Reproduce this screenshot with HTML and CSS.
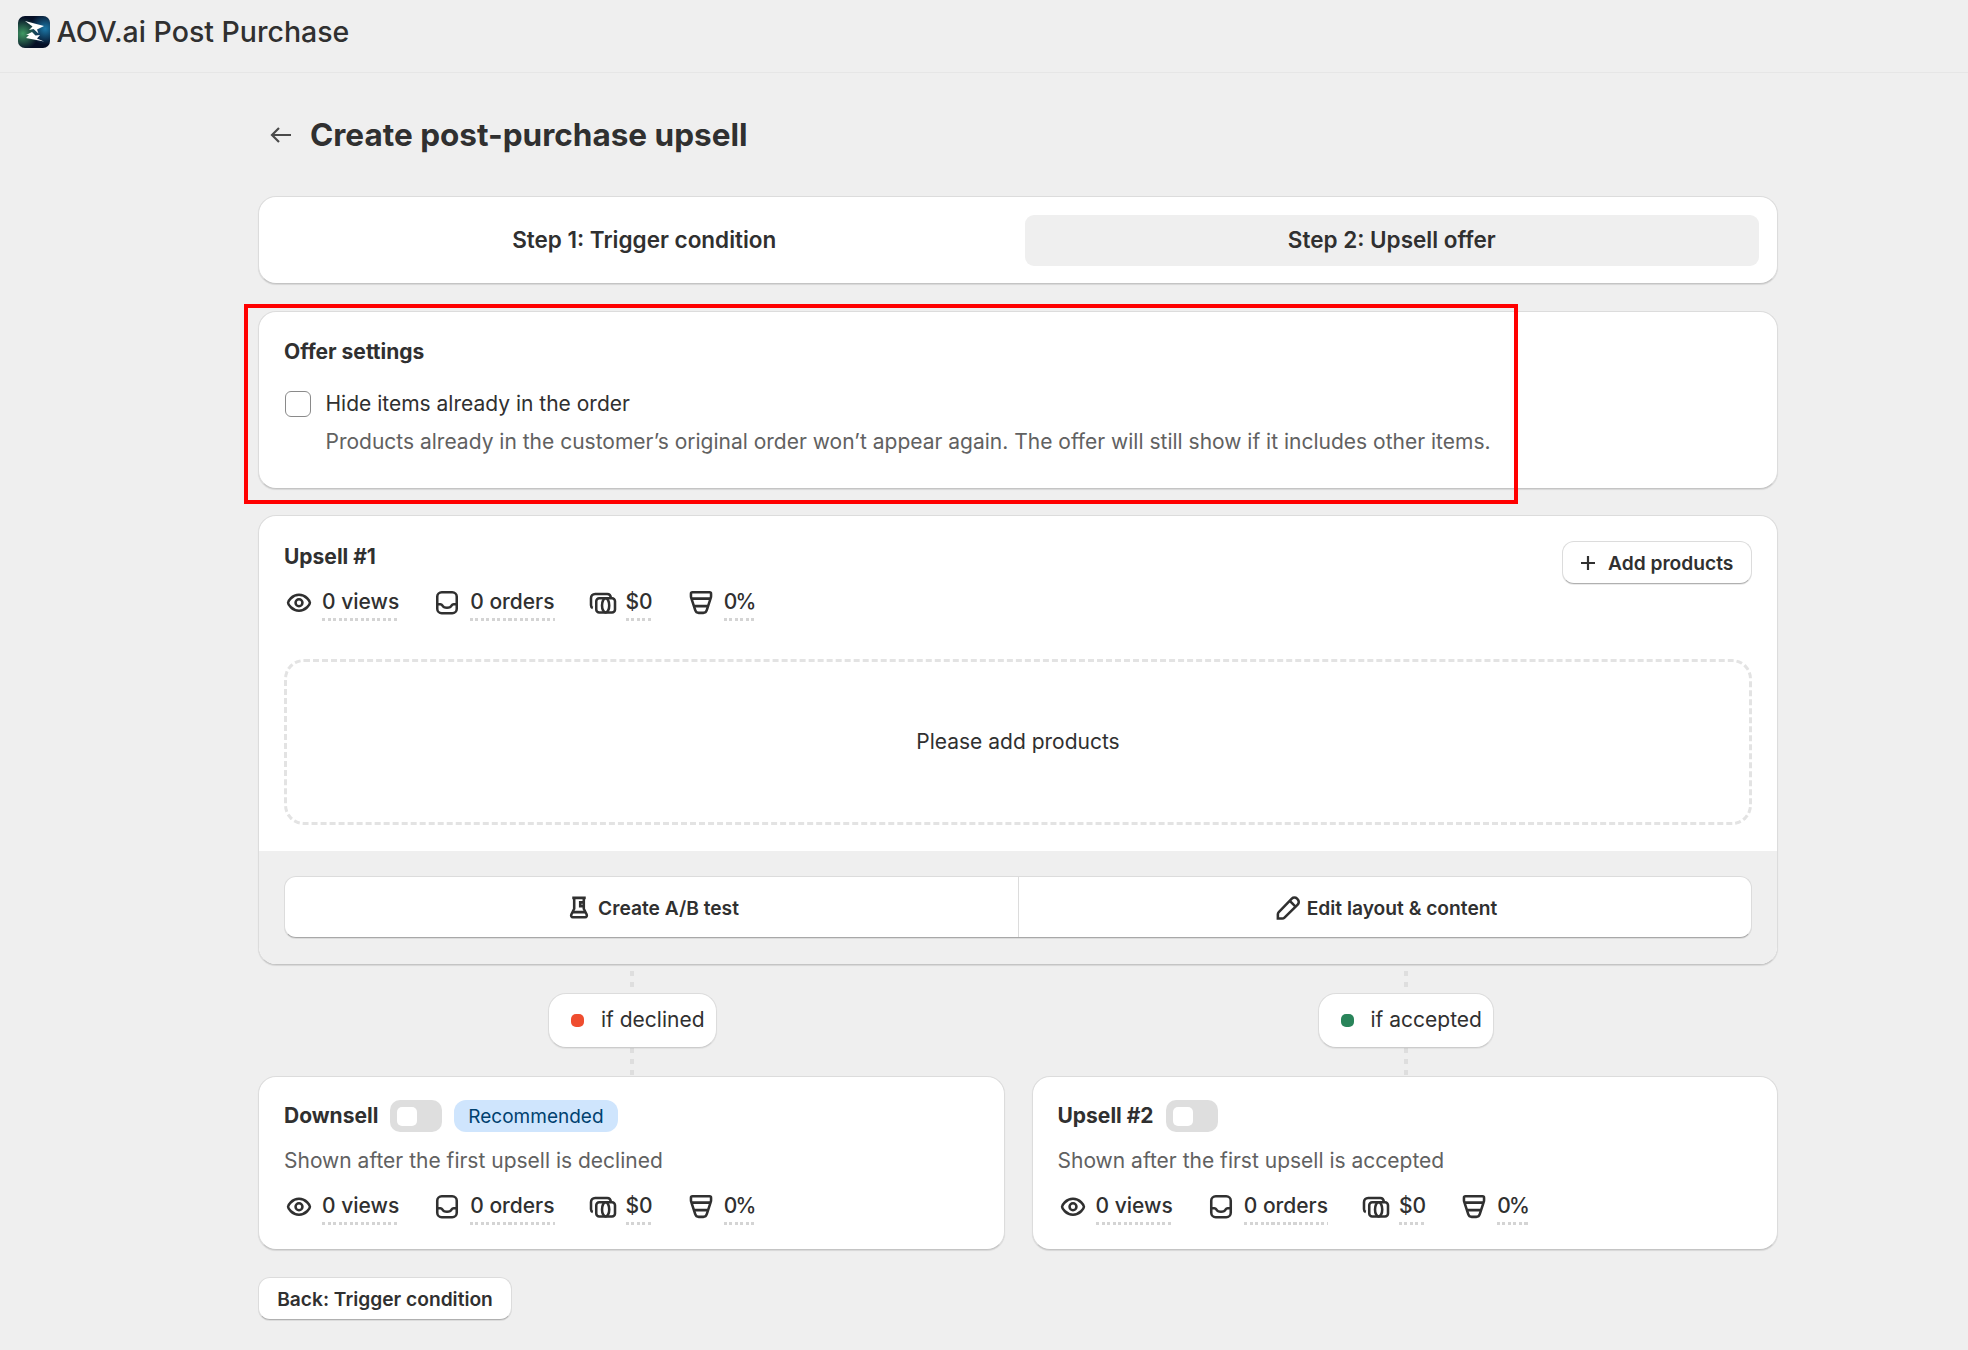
FILE: index.html
```html
<!DOCTYPE html>
<html lang="en">
<head>
<meta charset="utf-8"/>
    <title>AOV.ai Post Purchase</title>
    <link rel="stylesheet" href="styles.css">
</head>
<body>
    <svg class="sprites" width="0" height="0">
        <symbol id="i-eye" viewBox="0 0 20 20"><path d="M2.700 10.500c0-1 2.600-5.300 7.300-5.300s7.300 4.300 7.300 5.300-2.600 5.300-7.300 5.300S2.700 11.500 2.700 10.500z"/><circle cx="10" cy="10.500" r="2.300"/></symbol>
        <symbol id="i-inbox" viewBox="0 0 20 20"><rect x="3.500" y="3.500" width="13" height="14" rx="3"/><path d="M3.500 11.500h2.100c.6 0 1 .3 1.300.8.5 1 1.500 1.500 3.100 1.500s2.600-.5 3.100-1.500c.3-.5.7-.8 1.300-.8h2.100"/></symbol>
        <symbol id="i-cash" viewBox="0 0 20 20"><rect x="5.500" y="7.500" width="12.500" height="9.500" rx="2"/><ellipse cx="11.750" cy="12.250" rx="2.400" ry="4.750"/><path d="M3.200 14c-.9-.3-1.200-1-1.200-1.800V7.500c0-1.700 1.100-2.800 2.800-2.800h8c1.400 0 2.300.8 2.500 2.800"/></symbol>
        <symbol id="i-funnel" viewBox="0 0 20 20"><path d="M4.300 3.500h11.400c.6 0 1 .4 1 1v1.600c0 .5-.1 1-.3 1.500l-2.600 7.900c-.3 1.100-1.200 1.750-2.300 1.750h-3c-1.100 0-2-.65-2.300-1.750L3.600 7.600c-.2-.5-.3-1-.3-1.500V4.500c0-.6.4-1 1-1z"/><path d="M3.600 7.750h12.800M5.500 12.750h9"/></symbol>
    </svg>

    <header class="topbar">
        <svg class="logo" viewBox="0 0 32 32">
            <defs>
                <radialGradient id="logo-green" cx="0.15" cy="0.55" r="0.5"><stop offset="0" stop-color="#3f9a63"/><stop offset="1" stop-color="#3f9a63" stop-opacity="0"/></radialGradient>
                <radialGradient id="logo-blue" cx="0.85" cy="0.4" r="0.5"><stop offset="0" stop-color="#1c78a8"/><stop offset="1" stop-color="#1c78a8" stop-opacity="0"/></radialGradient>
            </defs>
            <rect width="32" height="32" rx="7" fill="#050f26"/>
            <rect width="32" height="32" rx="7" fill="url(#logo-green)"/>
            <rect width="32" height="32" rx="7" fill="url(#logo-blue)"/>
            <path fill="#fff" d="M7 5l19 5-7 3.500 1.500 4-5-4.500-4.500 1 3.500-3.500zM8 19l6-3 3.500 3.500 4.500-.5-3 3.500 7 3-18-3.500 3-3z"/>
        </svg>
        <span class="app-name">AOV.ai Post Purchase</span>
    </header>

    <main class="page">
        <div class="page-title">
            <svg class="back-arrow" viewBox="0 0 22 16"><path d="M21 8H2M9 1L2 8l7 7"/></svg>
            <h1>Create post-purchase upsell</h1>
        </div>

        <section class="card steps">
            <div class="step">Step 1: Trigger condition</div>
            <div class="step step-active">Step 2: Upsell offer</div>
        </section>

        <div class="settings-wrap">
            <section class="card settings">
                <h2>Offer settings</h2>
                <div class="check-row">
                    <span class="checkbox"></span>
                    <div>
                        <div class="check-label">Hide items already in the order</div>
                        <div class="subdued check-help">Products already in the customer’s original order won’t appear again. The offer will still show if it includes other items.</div>
                    </div>
                </div>
            </section>
            <div class="highlight"></div>
        </div>

        <section class="card upsell">
            <div class="upsell-body">
                <div class="upsell-head">
                    <div class="upsell-info">
                        <h2>Upsell #1</h2>
                        <div class="stats">
                            <div class="stat"><svg class="icon"><use href="#i-eye"/></svg><span class="stat-val">0 views</span></div>
                            <div class="stat"><svg class="icon"><use href="#i-inbox"/></svg><span class="stat-val">0 orders</span></div>
                            <div class="stat"><svg class="icon"><use href="#i-cash"/></svg><span class="stat-val">$0</span></div>
                            <div class="stat"><svg class="icon"><use href="#i-funnel"/></svg><span class="stat-val stat-pct">0%</span></div>
                        </div>
                    </div>
                    <div class="btn btn-add">
                        <svg class="icon-plus" viewBox="0 0 18 18"><path d="M9 2v14M2 9h14"/></svg>
                        Add products
                    </div>
                </div>
                <div class="dropzone">Please add products</div>
            </div>
            <div class="upsell-foot">
                <div class="btn-group">
                    <div class="group-btn">
                        <svg class="icon" viewBox="0 0 20 20"><path d="M5.500 3.250h9M6.800 3.250v7.250l-1.900 3.800c-.4 1 .1 1.900 1 1.900h8.200c.9 0 1.400-.9 1-1.900l-1.900-3.800V3.250"/><path d="M5.800 12.750h8.400M13 6.250h-2.200v2.500H13"/></svg>
                        Create A/B test
                    </div>
                    <div class="group-btn">
                        <svg class="icon" viewBox="0 0 20 20"><path d="M3.250 17v-2.800c0-.6.2-1.100.6-1.500l8.700-8.900a2.500 2.500 0 0 1 3.500 0l.4.400a2.500 2.500 0 0 1 0 3.500l-8.800 8.700c-.4.400-.9.600-1.500.6z"/><path d="M11.200 5.300l3.800 3.800"/></svg>
                        Edit layout &amp; content
                    </div>
                </div>
            </div>
        </section>

        <div class="branches">
            <div class="branch">
                <div class="connector"><div class="pill"><span class="dot dot-red"></span>if declined</div></div>
                <section class="card next-card">
                    <div class="next-head">
                        <h2>Downsell</h2>
                        <span class="toggle"><span class="knob"></span></span>
                        <span class="badge">Recommended</span>
                    </div>
                    <div class="subdued next-help">Shown after the first upsell is declined</div>
                    <div class="stats">
                        <div class="stat"><svg class="icon"><use href="#i-eye"/></svg><span class="stat-val">0 views</span></div>
                        <div class="stat"><svg class="icon"><use href="#i-inbox"/></svg><span class="stat-val">0 orders</span></div>
                        <div class="stat"><svg class="icon"><use href="#i-cash"/></svg><span class="stat-val">$0</span></div>
                        <div class="stat"><svg class="icon"><use href="#i-funnel"/></svg><span class="stat-val stat-pct">0%</span></div>
                    </div>
                </section>
            </div>
            <div class="branch">
                <div class="connector"><div class="pill"><span class="dot dot-green"></span>if accepted</div></div>
                <section class="card next-card">
                    <div class="next-head">
                        <h2>Upsell #2</h2>
                        <span class="toggle"><span class="knob"></span></span>
                    </div>
                    <div class="subdued next-help">Shown after the first upsell is accepted</div>
                    <div class="stats">
                        <div class="stat"><svg class="icon"><use href="#i-eye"/></svg><span class="stat-val">0 views</span></div>
                        <div class="stat"><svg class="icon"><use href="#i-inbox"/></svg><span class="stat-val">0 orders</span></div>
                        <div class="stat"><svg class="icon"><use href="#i-cash"/></svg><span class="stat-val">$0</span></div>
                        <div class="stat"><svg class="icon"><use href="#i-funnel"/></svg><span class="stat-val stat-pct">0%</span></div>
                    </div>
                </section>
            </div>
        </div>

        <div class="btn btn-back">Back: Trigger condition</div>
    </main>
</body>
</html>
```

FILE: styles.css
```css
* {
    box-sizing: border-box;
}
html, body {
    margin: 0;
    height: 1350px;
    overflow: hidden;
}
body {
    background: #efefef;
    color: #303030;
    font-family: Inter, "Noto Sans", sans-serif;
    font-size: 21px;
    line-height: 30px;
}
h1, h2 {
    margin: 0;
}
h2 {
    font-size: 21px;
    font-weight: 650;
    line-height: 30px;
}
.sprites {
    position: absolute;
}

.topbar {
    height: 73px;
    display: flex;
    align-items: center;
    gap: 6.500px;
    padding: 0 18px 9px;
    border-bottom: 1px solid #e6e6e6;
}
.logo {
    width: 32px;
    height: 32px;
}
.app-name {
    font-size: 28.500px;
    font-weight: 550;
}

.page {
    width: 1520px;
    margin-left: 258px;
}
.page-title {
    height: 123px;
    display: flex;
    align-items: center;
    padding: 0 0 0 12px;
    gap: 18px;
}
.back-arrow {
    width: 22px;
    height: 16px;
    fill: none;
    stroke: #4a4a4a;
    stroke-width: 2.200;
}
h1 {
    font-size: 31.500px;
    font-weight: 700;
    line-height: 40px;
}

.card {
    background: #fff;
    border: 1.500px solid #dcdcdc;
    border-bottom-color: #c4c4c4;
    border-radius: 18px;
    box-shadow: 0 1px 1px rgba(0, 0, 0, 0.1);
}
.steps {
    height: 88px;
    display: grid;
    grid-template-columns: 1fr 1fr;
    gap: 13px;
    padding: 17.500px 18px;
    margin-bottom: 27px;
}
.step {
    height: 51px;
    border-radius: 9px;
    display: flex;
    align-items: center;
    justify-content: center;
    font-size: 22.500px;
    font-weight: 600;
}
.step-active {
    background: #efefef;
}

.settings-wrap {
    position: relative;
    margin-bottom: 26px;
}
.settings {
    height: 178px;
    padding: 25px;
}
.highlight {
    position: absolute;
    left: -14px;
    top: -7px;
    width: 1274px;
    height: 200px;
    border: 4px solid #ff0000;
}
.check-row {
    display: flex;
    gap: 14.500px;
    margin-top: 20px;
}
.checkbox {
    width: 26px;
    height: 26px;
    margin: 3.500px 0 0 1px;
    border: 1.500px solid #8a8a8a;
    border-radius: 6px;
    background: #fff;
}
.check-label {
    line-height: 33px;
}
.check-help {
    margin-top: 6.500px;
}
.subdued {
    color: #616161;
}

.upsell {
    height: 450px;
    overflow: hidden;
}
.upsell-body {
    height: 334.500px;
    padding: 25px 25px 0;
}
.upsell-head {
    display: flex;
    justify-content: space-between;
    align-items: flex-start;
}
.upsell-info {
    padding-top: 1px;
}
.stats {
    display: flex;
    gap: 33px;
    margin-top: 15px;
}
.stat {
    display: flex;
    gap: 8px;
    font-weight: 550;
}
.stat-val {
    padding-bottom: 4px;
    background: repeating-linear-gradient(90deg, #d4d4d4 0 3px, transparent 3px 5.500px) left bottom / 100% 3px no-repeat;
}
.stat-pct {
    letter-spacing: -1.800px;
}
.icon {
    width: 30px;
    height: 30px;
    flex: none;
    fill: none;
    stroke: #303030;
    stroke-width: 1.700;
}

.btn {
    display: inline-flex;
    align-items: center;
    height: 43px;
    background: #fff;
    border: 1.500px solid #dcdcdc;
    border-bottom-color: #b0b0b0;
    border-radius: 12px;
    font-size: 19.200px;
    font-weight: 600;
    box-shadow: 0 1px 0 rgba(0, 0, 0, 0.08);
}
.btn-add {
    width: 190px;
    padding-left: 16px;
    gap: 11px;
}
.icon-plus {
    width: 18px;
    height: 18px;
    fill: none;
    stroke: #303030;
    stroke-width: 2.200;
}
.dropzone {
    height: 166px;
    margin-top: 38px;
    border: 3px dashed #e3e3e3;
    border-radius: 20px;
    display: flex;
    align-items: center;
    justify-content: center;
}

.upsell-foot {
    height: 114px;
    padding: 25px;
    background: #efefef;
}
.btn-group {
    height: 62px;
    display: grid;
    grid-template-columns: 1fr 1fr;
    background: #fff;
    border: 1.500px solid #dcdcdc;
    border-bottom-color: #a8a8a8;
    border-radius: 12px;
    box-shadow: 0 1px 0 rgba(0, 0, 0, 0.08);
}
.group-btn {
    display: flex;
    align-items: center;
    justify-content: center;
    gap: 4px;
    padding-top: 2px;
    font-size: 19.200px;
    font-weight: 600;
}
.group-btn + .group-btn {
    border-left: 1.500px solid #dcdcdc;
}

.branches {
    display: grid;
    grid-template-columns: 1fr 1fr;
    gap: 27px;
    margin-bottom: 27px;
}
.connector {
    height: 110.500px;
    display: flex;
    align-items: center;
    justify-content: center;
    padding-left: 2px;
    background: repeating-linear-gradient(180deg, #dedede 0 5px, transparent 5px 11px) calc(50% + 1px) 6px / 4px 100% no-repeat;
}
.pill {
    height: 55px;
    display: flex;
    align-items: center;
    gap: 17px;
    padding: 0 11px 0 22px;
    background: #fff;
    border: 1.500px solid #dcdcdc;
    border-bottom-color: #cccccc;
    border-radius: 18px;
    box-shadow: 0 1px 1px rgba(0, 0, 0, 0.06);
}
.dot {
    width: 13px;
    height: 13px;
    border-radius: 5px;
}
.dot-red {
    background: #ef4d2f;
}
.dot-green {
    background: #29845a;
}
.next-card {
    height: 174.500px;
    padding: 16.500px 25px 0;
}
.next-head {
    height: 32px;
    display: flex;
    align-items: center;
    gap: 12px;
    margin-top: 7px;
}
.toggle {
    width: 52px;
    height: 32px;
    padding: 7px 0 0 7px;
    background: #dedede;
    border-radius: 10px;
}
.knob {
    display: block;
    width: 20px;
    height: 19px;
    background: #fff;
    border-radius: 5px;
}
.badge {
    height: 32px;
    padding: 0 14px;
    background: #cfe5fd;
    color: #00416f;
    border-radius: 12px;
    line-height: 33px;
    font-size: 19px;
}
.next-help {
    margin-top: 14px;
}
.btn-back {
    width: 254px;
    justify-content: center;
}
```
